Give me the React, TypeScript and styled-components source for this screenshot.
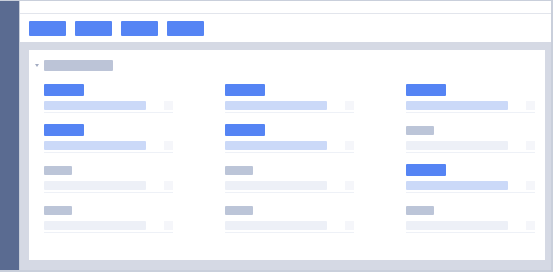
import React from 'react';
import styled, { createGlobalStyle } from 'styled-components';

const GlobalStyle = createGlobalStyle`
  html, body {
    margin: 0;
    padding: 0;
    background: #ffffff;
    font-family: "Liberation Sans", Arial, sans-serif;
  }
`;

const Frame = styled.div`
  display: flex;
  width: 553px;
  height: 272px;
  box-sizing: border-box;
  border-top: 1px solid #c9cfdb;
  border-right: 2px solid #c9cfdb;
  border-bottom: 2px solid #c9cfdb;
  overflow: hidden;
`;

const Sidebar = styled.aside`
  width: 19px;
  flex-shrink: 0;
  background: #5a6b91;
  border-right: 1px solid #c7cdd9;
`;

const Main = styled.div`
  flex: 1;
  display: flex;
  flex-direction: column;
  min-width: 0;
`;

const TopStrip = styled.div`
  height: 12px;
  background: #ffffff;
  border-bottom: 1px solid #e2e5ec;
`;

const Toolbar = styled.div`
  height: 28px;
  display: flex;
  align-items: flex-start;
  gap: 9px;
  padding: 7px 0 0 9px;
  box-sizing: border-box;
  background: #ffffff;
`;

const ToolButton = styled.button`
  width: 37px;
  height: 15px;
  border: none;
  border-radius: 1px;
  padding: 0;
  background: #5584f4;
`;

const Content = styled.div`
  flex: 1;
  background: #d5d9e4;
  padding: 8px 6px 10px 9px;
  display: flex;
`;

const Card = styled.section`
  flex: 1;
  background: #ffffff;
  padding: 10px 0 0 6px;
`;

const SectionHead = styled.div`
  display: flex;
  align-items: center;
  gap: 5px;
  height: 11px;
`;

const Caret = styled.span`
  width: 0;
  height: 0;
  border-left: 2px solid transparent;
  border-right: 2px solid transparent;
  border-top: 3px solid #a3acc2;
`;

const TitleBar = styled.span`
  width: 69px;
  height: 11px;
  border-radius: 1px;
  background: #bcc4d7;
`;

const Grid = styled.div`
  display: grid;
  grid-template-columns: repeat(3, 129px);
  column-gap: 52px;
  row-gap: 11px;
  margin: 13px 0 0 9px;
`;

const Field = styled.div`
  display: flex;
  flex-direction: column;
`;

const LabelRow = styled.div`
  height: 12px;
  display: flex;
  align-items: center;
`;

const Label = styled.span<{ $active: boolean }>`
  width: ${(p) => (p.$active ? '40px' : '28px')};
  height: ${(p) => (p.$active ? '12px' : '9px')};
  border-radius: 1px;
  background: ${(p) => (p.$active ? '#5584f4' : '#bcc5d8')};
`;

const InputRow = styled.div`
  display: flex;
  justify-content: space-between;
  margin-top: 5px;
  padding-bottom: 2px;
  border-bottom: 1px solid #eef1f7;
`;

const InputBar = styled.span<{ $active: boolean }>`
  width: 102px;
  height: 9px;
  border-radius: 1px;
  background: ${(p) => (p.$active ? '#cbd9f8' : '#edf0f7')};
`;

const Check = styled.span`
  width: 9px;
  height: 9px;
  background: #f5f6fa;
`;

const fields = [
  true, true, true,
  true, true, false,
  false, false, true,
  false, false, false,
];

export default function App() {
  return (
    <>
      <GlobalStyle />
      <Frame>
        <Sidebar />
        <Main>
          <TopStrip />
          <Toolbar>
            <ToolButton />
            <ToolButton />
            <ToolButton />
            <ToolButton />
          </Toolbar>
          <Content>
            <Card>
              <SectionHead>
                <Caret />
                <TitleBar />
              </SectionHead>
              <Grid>
                {fields.map((active, i) => (
                  <Field key={i}>
                    <LabelRow>
                      <Label $active={active} />
                    </LabelRow>
                    <InputRow>
                      <InputBar $active={active} />
                      <Check />
                    </InputRow>
                  </Field>
                ))}
              </Grid>
            </Card>
          </Content>
        </Main>
      </Frame>
    </>
  );
}
